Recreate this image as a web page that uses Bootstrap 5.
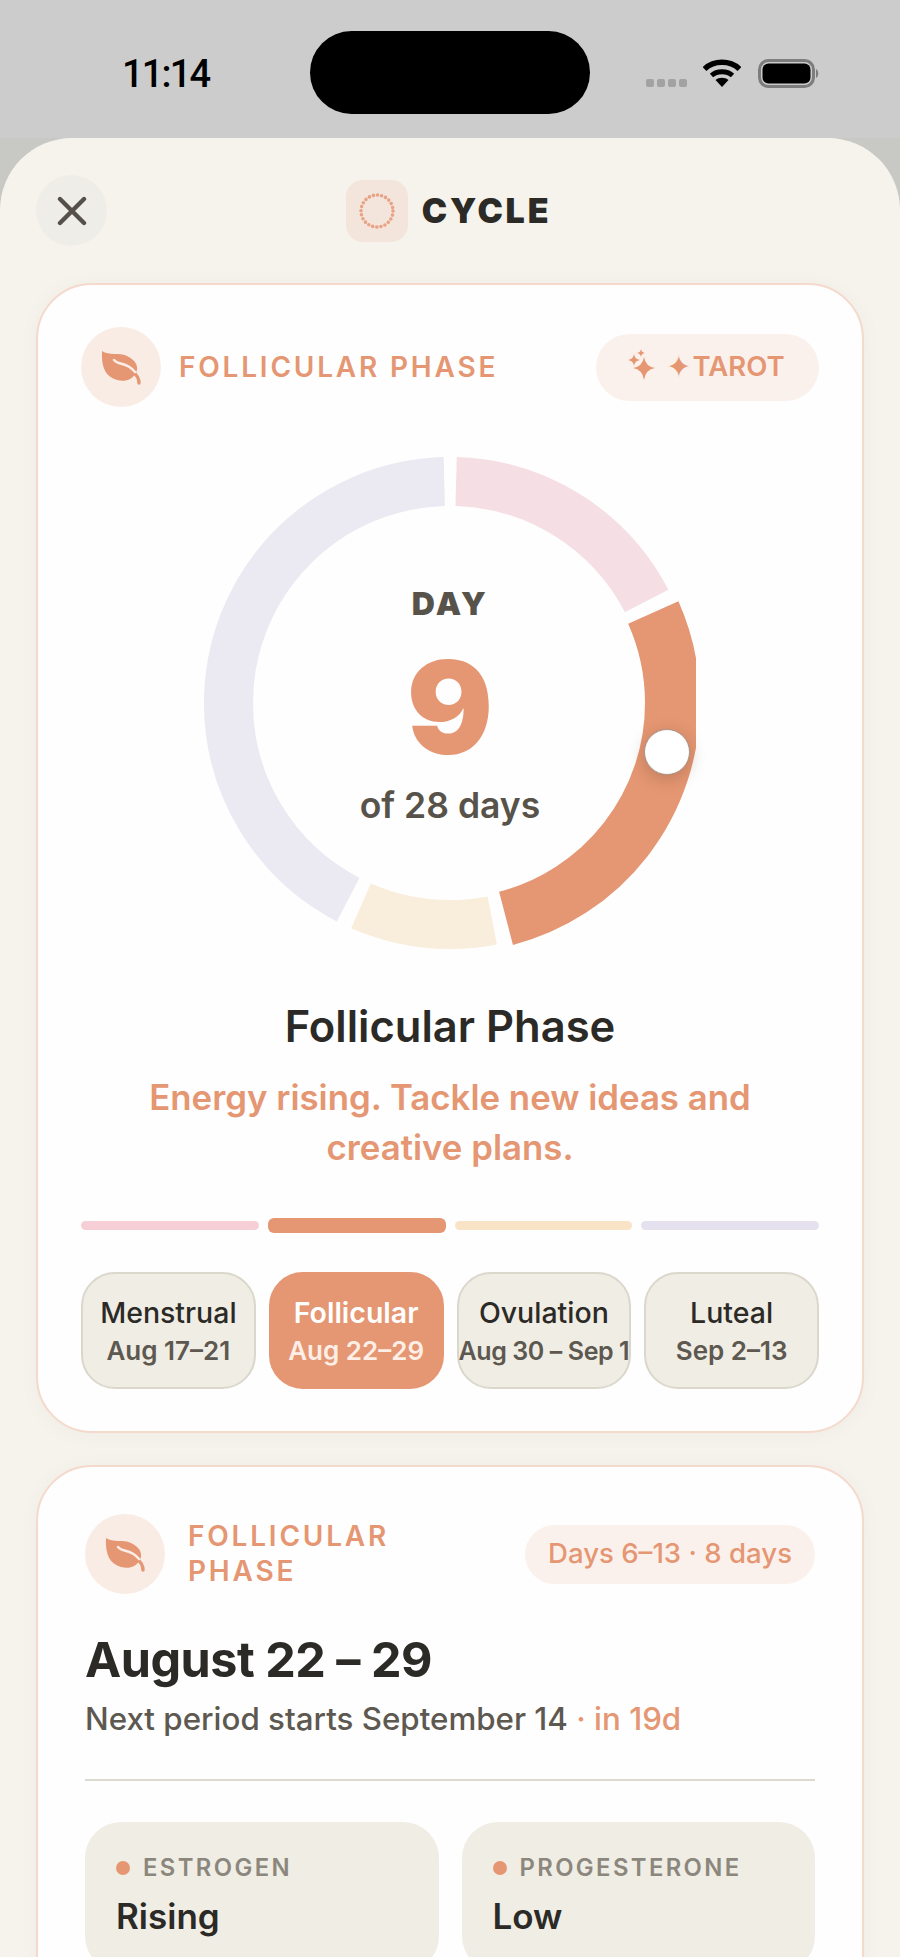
<!DOCTYPE html>
<html lang="en">
<head>
  <meta charset="UTF-8">
  <meta name="viewport" content="width=device-width, initial-scale=1.0">
  <title>Cycle</title>
  <link href="https://cdn.jsdelivr.net/npm/bootstrap@5.3.0/dist/css/bootstrap.min.css" rel="stylesheet">
  <style>
    html, body { height: 1957px; overflow: hidden; }
    body { background-color: #c8c8c4; font-family: Inter, "Liberation Sans", sans-serif; color: #2c2a26; }

    /* status bar */
    .status-bar { height: 138px; background-color: #cccccc; padding: 0 0 0 122px; }
    .status-time { width: 188px; font-family: Roboto, sans-serif; font-size: 38px; font-weight: 500; line-height: 1; color: #000; padding-top: 55px; letter-spacing: -1.8px; }
    .island { width: 280px; height: 83px; margin-top: 31px; background-color: #000; border-radius: 42px; }
    .status-right { margin-left: 56px; padding-top: 59px; }
    .sig-dots { gap: 3px; margin-top: 20px; margin-right: 16px; }
    .sig-dots span { width: 8px; height: 8px; background-color: #a2a2a2; border-radius: 2px; }
    .wifi { width: 38px; height: 28px; margin-right: 17px; flex-shrink: 0; }
    .batt { width: 62px; height: 29px; flex-shrink: 0; }

    /* sheet */
    .sheet { background-color: #f6f3ed; border-radius: 72px 72px 0 0; padding: 37px 36px 0; }
    .sheet-head { display: grid; grid-template-columns: 1fr auto 1fr; align-items: center; margin-bottom: 37px; }
    .close-btn { width: 71px; height: 71px; background-color: #efede7; border: 0; padding: 0; }
    .logo-group { padding-right: 3px; }
    .logo-tile { width: 62px; height: 62px; background-color: #f3e5dc; border-radius: 17px; margin-right: 14px; }
    .logo-word { font-size: 34px; font-weight: 900; letter-spacing: 2.8px; line-height: 1; }

    .phase-card { background-color: #fefefe; border: 2px solid #f4d9cc; border-radius: 56px; box-shadow: 0 2px 18px rgba(120, 110, 90, .05); }
    .card-a { padding: 42px 43px; margin-bottom: 32px; }
    .card-b { padding: 47px 47px 60px; }

    .leaf-disc { width: 80px; height: 80px; background-color: #f9ece5; flex-shrink: 0; }
    .leaf-gap-a { margin-right: 18px; }
    .leaf-gap-b { margin-right: 23px; }
    .phase-label { font-size: 28px; font-weight: 600; letter-spacing: 2.8px; line-height: 35px; color: #e59672; }
    .tarot-pill { width: 223px; height: 67px; background-color: #fbf1ec; color: #e59672; font-size: 27.5px; font-weight: 600; border: 0; padding: 0 6px 0 0; }
    .tarot-star { font-family: "DejaVu Sans", sans-serif; font-size: 30px; line-height: 1; margin: 0 1px 0 6px; }

    /* ring */
    .ring-wrap { position: relative; width: 492px; height: 494px; margin: 49px auto 0; }
    .ring-wrap svg { display: block; overflow: hidden; }
    .ring-center { position: absolute; inset: 0; }
    .ring-day { font-size: 32px; font-weight: 900; letter-spacing: 2.4px; line-height: 1; color: #58534a; margin-top: 132px; }
    .ring-num { font-size: 128px; font-weight: 900; line-height: 1; color: #e59672; margin-top: 24px; }
    .ring-of { font-size: 35.5px; font-weight: 600; line-height: 1; color: #58534a; margin-top: 16px; }
    .ring-knob { position: absolute; left: 440px; top: 273px; width: 46px; height: 46px; background-color: #fff; border: 1px solid #a8958a; box-shadow: 0 4px 16px rgba(90, 60, 40, .28); }

    .phase-title { font-size: 43.5px; font-weight: 600; line-height: 50px; margin: 51px 0 21px; }
    .phase-sub { font-size: 34.8px; font-weight: 600; line-height: 50px; color: #e59672; margin: 0 0 45px; }

    .seg-bars { height: 16px; gap: 9px; margin-bottom: 39px; }
    .seg-bars span { flex: 1 1 0; height: 9px; border-radius: 5px; }
    .seg-bars .seg-on { height: 15px; border-radius: 6px; background-color: #e59672; }
    .seg-pink { background-color: #f6cfd6; }
    .seg-cream { background-color: #f8e3c6; }
    .seg-lilac { background-color: #e5e1ee; }

    .chip-row { gap: 13px; }
    .phase-chip { flex: 1 1 0; height: 117px; min-width: 0; background-color: #f0ede5; border: 2px solid #dbd7cb; border-radius: 34px; padding: 2px 0 0; white-space: nowrap; }
    .chip-name { font-size: 28.5px; font-weight: 500; line-height: 36px; color: #2c2a26; }
    .chip-date { font-size: 26px; font-weight: 600; line-height: 34px; margin-top: 3px; color: #5d5850; }
    .chip-date-tight { font-size: 25px; letter-spacing: -.4px; }
    .phase-chip.chip-on { background-color: #e59672; border-color: #e59672; }
    .chip-on .chip-name { color: #fff; font-weight: 600; }
    .chip-on .chip-date { color: #fdeee6; }

    .range-pill { width: 290px; height: 59px; background-color: #fbf1ec; color: #e59672; font-size: 27.6px; font-weight: 500; }
    .range-head { font-size: 48.5px; font-weight: 700; line-height: 56px; letter-spacing: -.5px; margin: 38px 0 11px; }
    .range-next { font-size: 31.3px; font-weight: 500; line-height: 40px; color: #5d5850; margin: 0 0 40px; }
    .range-next span { color: #e59672; }
    .range-rule { height: 2px; background-color: #dcd9d0; margin-bottom: 41px; }

    .stat-row { gap: 23px; }
    .stat-box { flex: 1 1 0; background-color: #f0ede5; border-radius: 36px; padding: 31px; height: 150px; }
    .stat-dot { width: 14px; height: 14px; background-color: #e59672; margin-right: 13px; }
    .stat-label { font-size: 23.8px; font-weight: 600; letter-spacing: 2.4px; line-height: 30px; color: #8c877d; }
    .stat-value { font-size: 35px; font-weight: 600; line-height: 44px; margin-top: 11px; }
  </style>
</head>
<body>

  <!-- Status bar -->
  <div class="status-bar d-flex">
    <div class="status-time">11:14</div>
    <div class="island"></div>
    <div class="status-right d-flex align-items-start">
      <div class="sig-dots d-flex"><span></span><span></span><span></span><span></span></div>
      <svg class="wifi" viewBox="0 0 38 28">
        <path d="M1.5 10 C11 1 27 1 36.5 10" fill="none" stroke="#000" stroke-width="5.5"/>
        <path d="M8.5 16.5 C14 11.5 24 11.5 29.5 16.5" fill="none" stroke="#000" stroke-width="5"/>
        <path d="M12.5 21 C16 18 22 18 25.5 21 L19 28Z" fill="#000"/>
      </svg>
      <svg class="batt" viewBox="0 0 62 29">
        <rect x="1.5" y="1.5" width="54" height="26" rx="9" fill="none" stroke="#7d7d7d" stroke-width="3"/>
        <rect x="4.5" y="4.5" width="48" height="20" rx="6" fill="#000"/>
        <path d="M58 10 C61 11 61 18 58 19Z" fill="#7d7d7d"/>
      </svg>
    </div>
  </div>

  <div class="sheet">
    <!-- Header -->
    <div class="sheet-head">
      <button class="close-btn rounded-circle d-flex align-items-center justify-content-center" type="button">
        <svg width="30" height="30" viewBox="0 0 30 30"><path d="M3 3 L27 27 M27 3 L3 27" stroke="#55514a" stroke-width="4.4" stroke-linecap="round"/></svg>
      </button>
      <div class="logo-group d-flex align-items-center">
        <div class="logo-tile d-flex align-items-center justify-content-center">
          <svg width="40" height="40" viewBox="0 0 40 40"><circle cx="20" cy="20" r="16" fill="none" stroke="#e8a284" stroke-width="3.6" stroke-linecap="round" stroke-dasharray="0 4.19"/></svg>
        </div>
        <div class="logo-word">CYCLE</div>
      </div>
      <div></div>
    </div>

    <!-- Cycle ring card -->
    <div class="card phase-card card-a">
      <div class="d-flex align-items-center justify-content-between">
        <div class="d-flex align-items-center">
          <div class="leaf-disc leaf-gap-a rounded-circle">
            <svg width="80" height="80" viewBox="0 0 80 80">
              <path d="M21 24 C28 29 38 25 46 29 C55 33 59 41 54 47 C51 53 44 55 36 53 C25 50 20 41 21 24Z" fill="#e59672"/>
              <path d="M52 45 C56 48 58 51 58 56" fill="none" stroke="#e59672" stroke-width="3.4" stroke-linecap="round"/>
              <path d="M33 33 C38 39 45 34 54 45" fill="none" stroke="#fbeee8" stroke-width="2.4" stroke-linecap="round"/>
            </svg>
          </div>
          <div class="phase-label">FOLLICULAR PHASE</div>
        </div>
        <button class="tarot-pill rounded-pill d-flex align-items-center justify-content-center" type="button">
          <svg width="36" height="40" viewBox="0 0 36 40">
            <path d="M20 10 Q21.5 19.5 31 21 Q21.5 22.5 20 33 Q18.5 22.5 9 21 Q18.5 19.5 20 10Z" fill="#e59672"/>
            <path d="M10 7 Q10.7 12.3 16 13 Q10.7 13.7 10 19 Q9.3 13.7 4 13 Q9.3 12.3 10 7Z" fill="#e59672"/>
            <path d="M17 2 Q17.4 5.6 21 6 Q17.4 6.4 17 10 Q16.6 6.4 13 6 Q16.6 5.6 17 2Z" fill="#e59672"/>
          </svg>
          <span class="tarot-star">&#10022;</span>TAROT
        </button>
      </div>

      <div class="ring-wrap">
        <svg width="492" height="494" viewBox="-246 -247 492 494">
          <g fill="none" transform="rotate(-90)">
            <circle r="221.5" pathLength="360" stroke="#f6dfe4" stroke-width="49" stroke-dasharray="61 299" stroke-dashoffset="-1.6"/>
            <circle r="222.5" pathLength="360" stroke="#e59672" stroke-width="55" stroke-dasharray="99.4 260.6" stroke-dashoffset="-66"/>
            <circle r="221.5" pathLength="360" stroke="#f9eddb" stroke-width="49" stroke-dasharray="34.7 325.3" stroke-dashoffset="-169"/>
            <circle r="221.5" pathLength="360" stroke="#ebe9f1" stroke-width="49" stroke-dasharray="151.1 208.9" stroke-dashoffset="-207.4"/>
          </g>
        </svg>
        <div class="ring-center text-center">
          <div class="ring-day">DAY</div>
          <div class="ring-num">9</div>
          <div class="ring-of">of 28 days</div>
        </div>
        <div class="ring-knob rounded-circle"></div>
      </div>

      <div class="phase-title text-center">Follicular Phase</div>
      <p class="phase-sub text-center">Energy rising. Tackle new ideas and<br>creative plans.</p>

      <div class="seg-bars d-flex align-items-center">
        <span class="seg-pink"></span>
        <span class="seg-on"></span>
        <span class="seg-cream"></span>
        <span class="seg-lilac"></span>
      </div>

      <div class="chip-row d-flex">
        <div class="phase-chip d-flex flex-column align-items-center justify-content-center">
          <div class="chip-name">Menstrual</div><div class="chip-date">Aug 17–21</div>
        </div>
        <div class="phase-chip chip-on d-flex flex-column align-items-center justify-content-center">
          <div class="chip-name">Follicular</div><div class="chip-date">Aug 22–29</div>
        </div>
        <div class="phase-chip d-flex flex-column align-items-center justify-content-center">
          <div class="chip-name">Ovulation</div><div class="chip-date chip-date-tight">Aug 30 – Sep 1</div>
        </div>
        <div class="phase-chip d-flex flex-column align-items-center justify-content-center">
          <div class="chip-name">Luteal</div><div class="chip-date">Sep 2–13</div>
        </div>
      </div>
    </div>

    <!-- Phase detail card -->
    <div class="card phase-card card-b">
      <div class="d-flex align-items-center justify-content-between">
        <div class="d-flex align-items-center">
          <div class="leaf-disc leaf-gap-b rounded-circle">
            <svg width="80" height="80" viewBox="0 0 80 80">
              <path d="M21 24 C28 29 38 25 46 29 C55 33 59 41 54 47 C51 53 44 55 36 53 C25 50 20 41 21 24Z" fill="#e59672"/>
              <path d="M52 45 C56 48 58 51 58 56" fill="none" stroke="#e59672" stroke-width="3.4" stroke-linecap="round"/>
              <path d="M33 33 C38 39 45 34 54 45" fill="none" stroke="#fbeee8" stroke-width="2.4" stroke-linecap="round"/>
            </svg>
          </div>
          <div class="phase-label">FOLLICULAR<br>PHASE</div>
        </div>
        <div class="range-pill rounded-pill d-flex align-items-center justify-content-center">Days 6–13 · 8 days</div>
      </div>

      <div class="range-head">August 22 – 29</div>
      <p class="range-next">Next period starts September 14 <span>· in 19d</span></p>
      <div class="range-rule"></div>

      <div class="stat-row d-flex">
        <div class="stat-box">
          <div class="d-flex align-items-center"><span class="stat-dot rounded-circle"></span><span class="stat-label">ESTROGEN</span></div>
          <div class="stat-value">Rising</div>
        </div>
        <div class="stat-box">
          <div class="d-flex align-items-center"><span class="stat-dot rounded-circle"></span><span class="stat-label">PROGESTERONE</span></div>
          <div class="stat-value">Low</div>
        </div>
      </div>
    </div>
  </div>

  <script src="https://cdn.jsdelivr.net/npm/bootstrap@5.3.0/dist/js/bootstrap.bundle.min.js"></script>
</body>
</html>
